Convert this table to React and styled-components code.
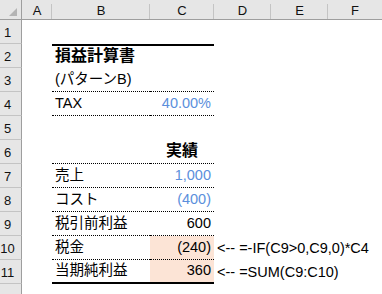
import React from 'react';
import styled, { createGlobalStyle } from 'styled-components';

const Global = createGlobalStyle`
  html, body { margin: 0; padding: 0; background: #ffffff; overflow: hidden; }
  body { font-family: "Liberation Sans", "Noto Sans CJK JP", sans-serif; }
  * { box-sizing: border-box; }
`;

const Sheet = styled.div`
  display: grid;
  grid-template-columns: 22px 30px 98px 64px 57px 57px 54px;
  grid-template-rows: 20px repeat(12, 24px);
  width: 382px;
  height: 294px;
  overflow: hidden;
  background: #ffffff;
`;

const Corner = styled.div`
  position: relative;
  background: #e6e6e6;
  border-bottom: 1px solid #9e9e9e;
  border-right: 1px solid #9e9e9e;
  svg { position: absolute; right: 4px; bottom: 3px; }
`;

const ColHeader = styled.div`
  position: relative;
  background: #e6e6e6;
  border-bottom: 1px solid #9e9e9e;
  display: flex;
  align-items: center;
  justify-content: center;
  font-size: 13px;
  color: #111;
  padding-top: 1px;
  &::after {
    content: '';
    position: absolute;
    right: 0;
    top: 4px;
    bottom: 0;
    width: 1px;
    background: ${(p) => (p.$last ? 'transparent' : '#c4c4c4')};
  }
`;

const RowHeader = styled.div`
  background: #e6e6e6;
  border-right: 1px solid #9e9e9e;
  border-bottom: 1px solid #c4c4c4;
  display: flex;
  align-items: center;
  justify-content: center;
  padding-right: 6px;
  padding-top: 2px;
  font-size: 13px;
  color: #111;
`;

const borderFor = (v) =>
  v === 'thick' ? '2px solid #000' : v === 'dotted' ? '1px dotted #000' : 'none';

const Cell = styled.div`
  display: flex;
  align-items: flex-end;
  justify-content: ${(p) =>
    p.$align === 'right' ? 'flex-end' : p.$align === 'center' ? 'center' : 'flex-start'};
  padding: 0 3px 3px 3px;
  white-space: nowrap;
  overflow: visible;
  font-size: ${(p) => (p.$big ? '16px' : '14.5px')};
  font-weight: ${(p) => (p.$bold ? 700 : 400)};
  line-height: 18px;
  color: ${(p) => (p.$blue ? '#5b8fdc' : '#000')};
  background: ${(p) => (p.$fill ? '#fce4d6' : 'transparent')};
  border-top: ${(p) => borderFor(p.$top)};
  border-bottom: ${(p) => borderFor(p.$bottom)};
  position: relative;
  z-index: ${(p) => (p.$over ? 1 : 0)};
`;

const cols = ['A', 'B', 'C', 'D', 'E', 'F'];

const rows = {
  2: { B: { t: '損益計算書', bold: true, big: true, top: 'thick' }, C: { top: 'thick' } },
  3: { B: { t: '(パターンB)', bottom: 'dotted' }, C: { bottom: 'dotted' } },
  4: {
    B: { t: 'TAX', bottom: 'dotted' },
    C: { t: '40.00%', align: 'right', blue: true, bottom: 'dotted' },
  },
  6: {
    B: { bottom: 'dotted' },
    C: { t: '実績', align: 'center', bold: true, big: true, bottom: 'dotted' },
  },
  7: {
    B: { t: '売上', bottom: 'dotted' },
    C: { t: '1,000', align: 'right', blue: true, bottom: 'dotted' },
  },
  8: {
    B: { t: 'コスト', bottom: 'dotted' },
    C: { t: '(400)', align: 'right', blue: true, bottom: 'dotted' },
  },
  9: {
    B: { t: '税引前利益', bottom: 'dotted' },
    C: { t: '600', align: 'right', bottom: 'dotted' },
  },
  10: {
    B: { t: '税金', bottom: 'dotted' },
    C: { t: '(240)', align: 'right', fill: true, bottom: 'dotted' },
    D: { t: '<-- =-IF(C9>0,C9,0)*C4', over: true },
  },
  11: {
    B: { t: '当期純利益', bottom: 'thick' },
    C: { t: '360', align: 'right', fill: true, bottom: 'thick' },
    D: { t: '<-- =SUM(C9:C10)', over: true },
  },
};

export default function App() {
  const cells = [];
  cells.push(
    <Corner key="corner">
      <svg width="8" height="8" viewBox="0 0 8 8">
        <polygon points="8,0 8,8 0,8" fill="#b4b4b4" />
      </svg>
    </Corner>
  );
  cols.forEach((c, i) =>
    cells.push(
      <ColHeader key={'h' + c} $last={i === cols.length - 1}>
        {c}
      </ColHeader>
    )
  );
  for (let r = 1; r <= 12; r++) {
    cells.push(<RowHeader key={'r' + r}>{r <= 11 ? r : ''}</RowHeader>);
    cols.forEach((c) => {
      const d = (rows[r] && rows[r][c]) || {};
      cells.push(
        <Cell
          key={c + r}
          $align={d.align}
          $bold={d.bold}
          $big={d.big}
          $blue={d.blue}
          $fill={d.fill}
          $top={d.top}
          $bottom={d.bottom}
          $over={d.over}
        >
          {d.t || ''}
        </Cell>
      );
    });
  }
  return (
    <>
      <Global />
      <Sheet>{cells}</Sheet>
    </>
  );
}
